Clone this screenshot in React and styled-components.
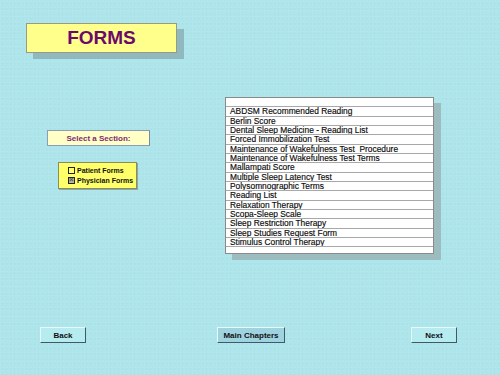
import React from "react";
import styled, { createGlobalStyle } from "styled-components";

const Global = createGlobalStyle`
  html, body { margin: 0; padding: 0; }
  body { background: #ade5eb; font-family: "Liberation Sans", Arial, sans-serif; }
`;

const Page = styled.div`
  width: 500px;
  height: 375px;
  display: flex;
  flex-direction: column;
  background-color: #ade5eb;
  background-image:
    radial-gradient(circle at 30% 40%, rgba(255,255,255,0.08) 0 0.6px, transparent 1px),
    radial-gradient(circle at 70% 80%, rgba(0,80,100,0.04) 0 0.6px, transparent 1px);
  background-size: 3px 3px, 4px 5px;
  overflow: hidden;
`;

const Header = styled.div`
  padding: 23px 0 0 26px;
`;

const TitleBox = styled.div`
  width: 149px;
  height: 28px;
  background: #ffff8c;
  border: 1px solid #9a9a80;
  box-shadow: 7px 6px 0 #8fb9be;
  display: flex;
  align-items: center;
  justify-content: center;
  font-size: 19px;
  font-weight: bold;
  color: #6c0a6c;
`;

const Main = styled.div`
  display: flex;
  align-items: flex-start;
  margin-top: 44px;
`;

const LeftCol = styled.div`
  display: flex;
  flex-direction: column;
  padding: 33px 0 0 47px;
  width: 103px;
`;

const SectionBox = styled.div`
  height: 14px;
  border: 1px solid #8e9cbc;
  border-right-color: #7c88a8;
  background: #ffffc6;
  display: flex;
  align-items: center;
  justify-content: center;
  font-size: 8px;
  font-weight: bold;
  color: #802a78;
`;

const CheckPanel = styled.div`
  margin: 16px 0 0 11px;
  height: 25px;
  background: #ffff6a;
  border: 1px solid #8c8c5a;
  box-shadow: 1px 1px 0 #8aa8a8;
  display: flex;
  flex-direction: column;
  justify-content: center;
  gap: 2px;
  padding-left: 9px;
  box-sizing: content-box;
  width: 68px;
`;

const CheckRow = styled.div`
  display: flex;
  align-items: center;
  gap: 2px;
  font-size: 7px;
  font-weight: bold;
  color: #111;
  line-height: 8px;
`;

const Box = styled.span`
  width: 5px;
  height: 5px;
  border: 1px solid #222;
  background: ${(p) => (p.$checked ? "#b8b898" : "transparent")};
  position: relative;
  flex: none;
  &::after {
    content: ${(p) => (p.$checked ? '"×"' : '""')};
    position: absolute;
    left: 0;
    top: -2px;
    font-size: 8px;
    line-height: 8px;
    color: #555;
  }
`;

const List = styled.div`
  margin-left: 75px;
  width: 207px;
  background: #ffffff;
  border: 1px solid #8a8a8a;
  box-shadow: 7px 6px 0 #9cbcc0;
  display: flex;
  flex-direction: column;
`;

const Row = styled.div`
  height: 9.33px;
  box-sizing: border-box;
  border-bottom: 1px solid #a8a8a8;
  font-size: 8.4px;
  line-height: 9px;
  color: #0a0a0a;
  -webkit-text-stroke: 0.15px #0a0a0a;
  padding-left: 4px;
  white-space: pre;
  overflow: hidden;
  &:last-child { border-bottom: none; height: 6px; }
`;

const Footer = styled.div`
  display: flex;
  align-items: flex-start;
  margin-top: 73px;
  padding-left: 40px;
`;

const Button = styled.div`
  margin-left: ${(p) => p.$ml || 0}px;
  width: ${(p) => p.$w}px;
  height: 16px;
  box-sizing: border-box;
  background: ${(p) => (p.$primary ? "#9fd3df" : "#b6ebf0")};
  border-top: 1px solid #e6fafc;
  border-left: 1px solid #e6fafc;
  border-right: 1px solid #3d5a66;
  border-bottom: 1px solid #3d5a66;
  display: flex;
  align-items: center;
  justify-content: center;
  font-size: 8px;
  font-weight: bold;
  color: #111;
`;

const items = [
  "ABDSM Recommended Reading",
  "Berlin Score",
  "Dental Sleep Medicine - Reading List",
  "Forced Immobilization Test",
  "Maintenance of Wakefulness Test  Procedure",
  "Maintenance of Wakefulness Test Terms",
  "Mallampati Score",
  "Multiple Sleep Latency Test",
  "Polysomnographic Terms",
  "Reading List",
  "Relaxation Therapy",
  "Scopa-Sleep Scale",
  "Sleep Restriction Therapy",
  "Sleep Studies Request Form",
  "Stimulus Control Therapy",
];

export default function App() {
  return (
    <Page>
      <Global />
      <Header>
        <TitleBox>FORMS</TitleBox>
      </Header>
      <Main>
        <LeftCol>
          <SectionBox>Select a Section:</SectionBox>
          <CheckPanel>
            <CheckRow><Box />Patient Forms</CheckRow>
            <CheckRow><Box $checked />Physician Forms</CheckRow>
          </CheckPanel>
        </LeftCol>
        <List>
          <Row />
          {items.map((t) => (
            <Row key={t}>{t}</Row>
          ))}
          <Row />
        </List>
      </Main>
      <Footer>
        <Button $w={46}>Back</Button>
        <Button $w={68} $ml={131} $primary>Main Chapters</Button>
        <Button $w={46} $ml={126}>Next</Button>
      </Footer>
    </Page>
  );
}
